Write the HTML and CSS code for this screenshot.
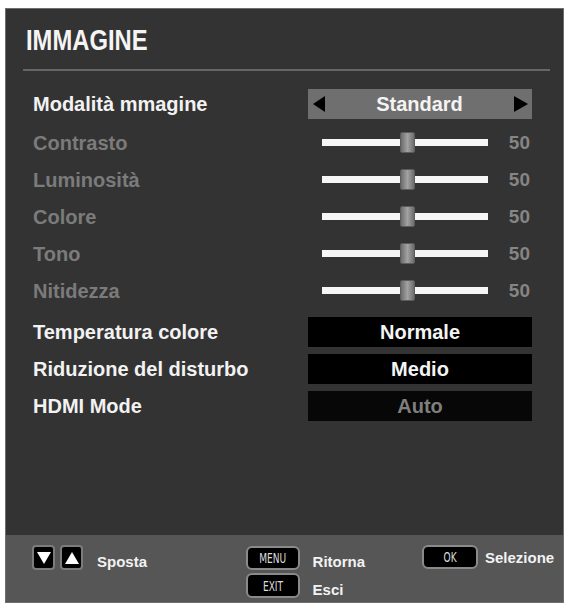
FILE: index.html
```html
<!DOCTYPE html>
<html lang="it">
<head>
<meta charset="utf-8">
<title>IMMAGINE</title>
<link rel="stylesheet" href="styles.css">
</head>
<body>
<div class="panel">
  <header class="head"><h1 class="title">IMMAGINE</h1></header>
  <div class="sep"></div>
  <div class="rows">
    <div class="row">
      <span class="label">Modalità mmagine</span>
      <div class="selector"><span class="arrow arrow-left"></span><span class="sel-val">Standard</span><span class="arrow arrow-right"></span></div>
    </div>
    <div class="row first-slider">
      <span class="label dim">Contrasto</span>
      <div class="slider"><div class="track"><span class="knob"></span></div><span class="num">50</span></div>
    </div>
    <div class="row">
      <span class="label dim">Luminosità</span>
      <div class="slider"><div class="track"><span class="knob"></span></div><span class="num">50</span></div>
    </div>
    <div class="row">
      <span class="label dim">Colore</span>
      <div class="slider"><div class="track"><span class="knob"></span></div><span class="num">50</span></div>
    </div>
    <div class="row">
      <span class="label dim">Tono</span>
      <div class="slider"><div class="track"><span class="knob"></span></div><span class="num">50</span></div>
    </div>
    <div class="row">
      <span class="label dim">Nitidezza</span>
      <div class="slider"><div class="track"><span class="knob"></span></div><span class="num">50</span></div>
    </div>
    <div class="row after-sliders">
      <span class="label">Temperatura colore</span>
      <div class="box">Normale</div>
    </div>
    <div class="row">
      <span class="label">Riduzione del disturbo</span>
      <div class="box">Medio</div>
    </div>
    <div class="row">
      <span class="label">HDMI Mode</span>
      <div class="box box-dim">Auto</div>
    </div>
  </div>
  <footer class="foot">
    <div class="nav">
      <span class="sq"><span class="tri-down"></span></span>
      <span class="sq"><span class="tri-up"></span></span>
      <span class="foot-text nav-text">Sposta</span>
    </div>
    <div class="keys">
      <div class="key-row">
        <span class="key"><span class="key-txt">MENU</span></span>
        <span class="foot-text key-desc">Ritorna</span>
      </div>
      <div class="key-row">
        <span class="key key-exit"><span class="key-txt">EXIT</span></span>
        <span class="foot-text key-desc">Esci</span>
      </div>
    </div>
    <div class="ok-group">
      <span class="key key-ok"><span class="key-txt">OK</span></span>
      <span class="foot-text ok-desc">Selezione</span>
    </div>
  </footer>
</div>
</body>
</html>
```

FILE: styles.css
```css
html, body {
  margin: 0;
  padding: 0;
  background: #ffffff;
}

body {
  font-family: "Liberation Sans", Arial, sans-serif;
}

.panel {
  box-sizing: border-box;
  width: 559px;
  height: 595px;
  margin: 8px 0 0 5px;
  background: #333333;
  border: 1px solid #6e6e6e;
  display: flex;
  flex-direction: column;
}

.head {
  padding: 14px 0 0 20px;
}

.title {
  margin: 0;
  display: inline-block;
  font-family: "Liberation Sans", Arial, sans-serif;
  font-weight: bold;
  font-size: 29px;
  line-height: 34px;
  color: #f4f4f4;
  transform: scaleX(0.82);
  transform-origin: left center;
}

.sep {
  height: 2px;
  margin: 12px 13px 0 17px;
  background: #666666;
}

.rows {
  margin-top: 18px;
  padding-left: 27px;
  display: flex;
  flex-direction: column;
  gap: 7px;
}

.row {
  display: grid;
  grid-template-columns: 275px 224px;
  align-items: center;
  height: 30px;
}

.first-slider {
  margin-top: 1.5px;
}

.after-sliders {
  margin-top: 4.7px;
}

.label {
  font-weight: bold;
  font-size: 20px;
  line-height: 30px;
  color: #f2f2f2;
  white-space: nowrap;
}

.label.dim {
  color: #7b7b7b;
}

.selector {
  height: 30px;
  background: #6f6f6f;
  display: flex;
  align-items: center;
  padding: 0 4px 0 5px;
}

.sel-val {
  flex: 1;
  text-align: center;
  font-weight: bold;
  font-size: 20px;
  color: #f4f4f4;
}

.arrow {
  width: 0;
  height: 0;
}

.arrow-left {
  border-top: 8px solid transparent;
  border-bottom: 8px solid transparent;
  border-right: 12px solid #000000;
}

.arrow-right {
  border-top: 8.5px solid transparent;
  border-bottom: 8.5px solid transparent;
  border-left: 14px solid #000000;
}

.slider {
  height: 30px;
  display: flex;
  align-items: center;
  padding-left: 14px;
}

.track {
  position: relative;
  width: 166px;
  height: 7px;
  background: #f6f6f6;
}

.knob {
  position: absolute;
  left: 78px;
  top: -7px;
  width: 15px;
  height: 21px;
  box-sizing: border-box;
  border: 1px solid #5c5c5c;
  border-radius: 2px;
  background: linear-gradient(to right, #6c6c6c, #a2a2a2 50%, #6c6c6c);
}

.num {
  margin-left: auto;
  padding-right: 2px;
  font-weight: bold;
  font-size: 19px;
  color: #858585;
}

.box {
  height: 30px;
  background: #000000;
  color: #f4f4f4;
  font-weight: bold;
  font-size: 20px;
  line-height: 30px;
  text-align: center;
}

.box-dim {
  background: #070707;
  color: #7e7e7e;
}

.foot {
  margin-top: auto;
  box-sizing: border-box;
  height: 67px;
  background: #565656;
  display: grid;
  grid-template-columns: 213.6px 176.4px auto;
  align-items: start;
  padding: 10px 0 0 26px;
}

.foot-text {
  font-weight: bold;
  font-size: 15px;
  color: #f2f2f2;
  white-space: nowrap;
}

.nav {
  display: flex;
  align-items: center;
}

.sq {
  box-sizing: border-box;
  width: 23px;
  height: 25px;
  margin-right: 5px;
  border: 2px solid #7c7c7c;
  border-radius: 4px;
  background: #000000;
  display: flex;
  align-items: center;
  justify-content: center;
}

.tri-down {
  width: 0;
  height: 0;
  border-left: 7px solid transparent;
  border-right: 7px solid transparent;
  border-top: 12px solid #ffffff;
}

.tri-up {
  width: 0;
  height: 0;
  border-left: 7px solid transparent;
  border-right: 7px solid transparent;
  border-bottom: 12px solid #ffffff;
}

.nav-text {
  margin-left: 9px;
  margin-top: 8px;
}

.keys {
  display: flex;
  flex-direction: column;
  gap: 3px;
}

.key-row {
  display: flex;
  align-items: center;
}

.key {
  box-sizing: border-box;
  width: 54px;
  height: 24px;
  border: 2px solid #8a8a8a;
  border-radius: 6px;
  background: #000000;
  display: flex;
  align-items: center;
  justify-content: center;
  overflow: hidden;
}

.key-exit {
  height: 25px;
}

.key-ok {
  width: 56px;
}

.key-txt {
  display: inline-block;
  font-family: "DejaVu Sans Condensed", "DejaVu Sans", sans-serif;
  font-size: 14px;
  color: #dcdcdc;
  transform: scaleX(0.72);
}

.key-desc {
  margin-left: 13px;
  margin-top: 8px;
}

.ok-group {
  display: flex;
  align-items: center;
}

.ok-desc {
  margin-left: 7px;
}
```
